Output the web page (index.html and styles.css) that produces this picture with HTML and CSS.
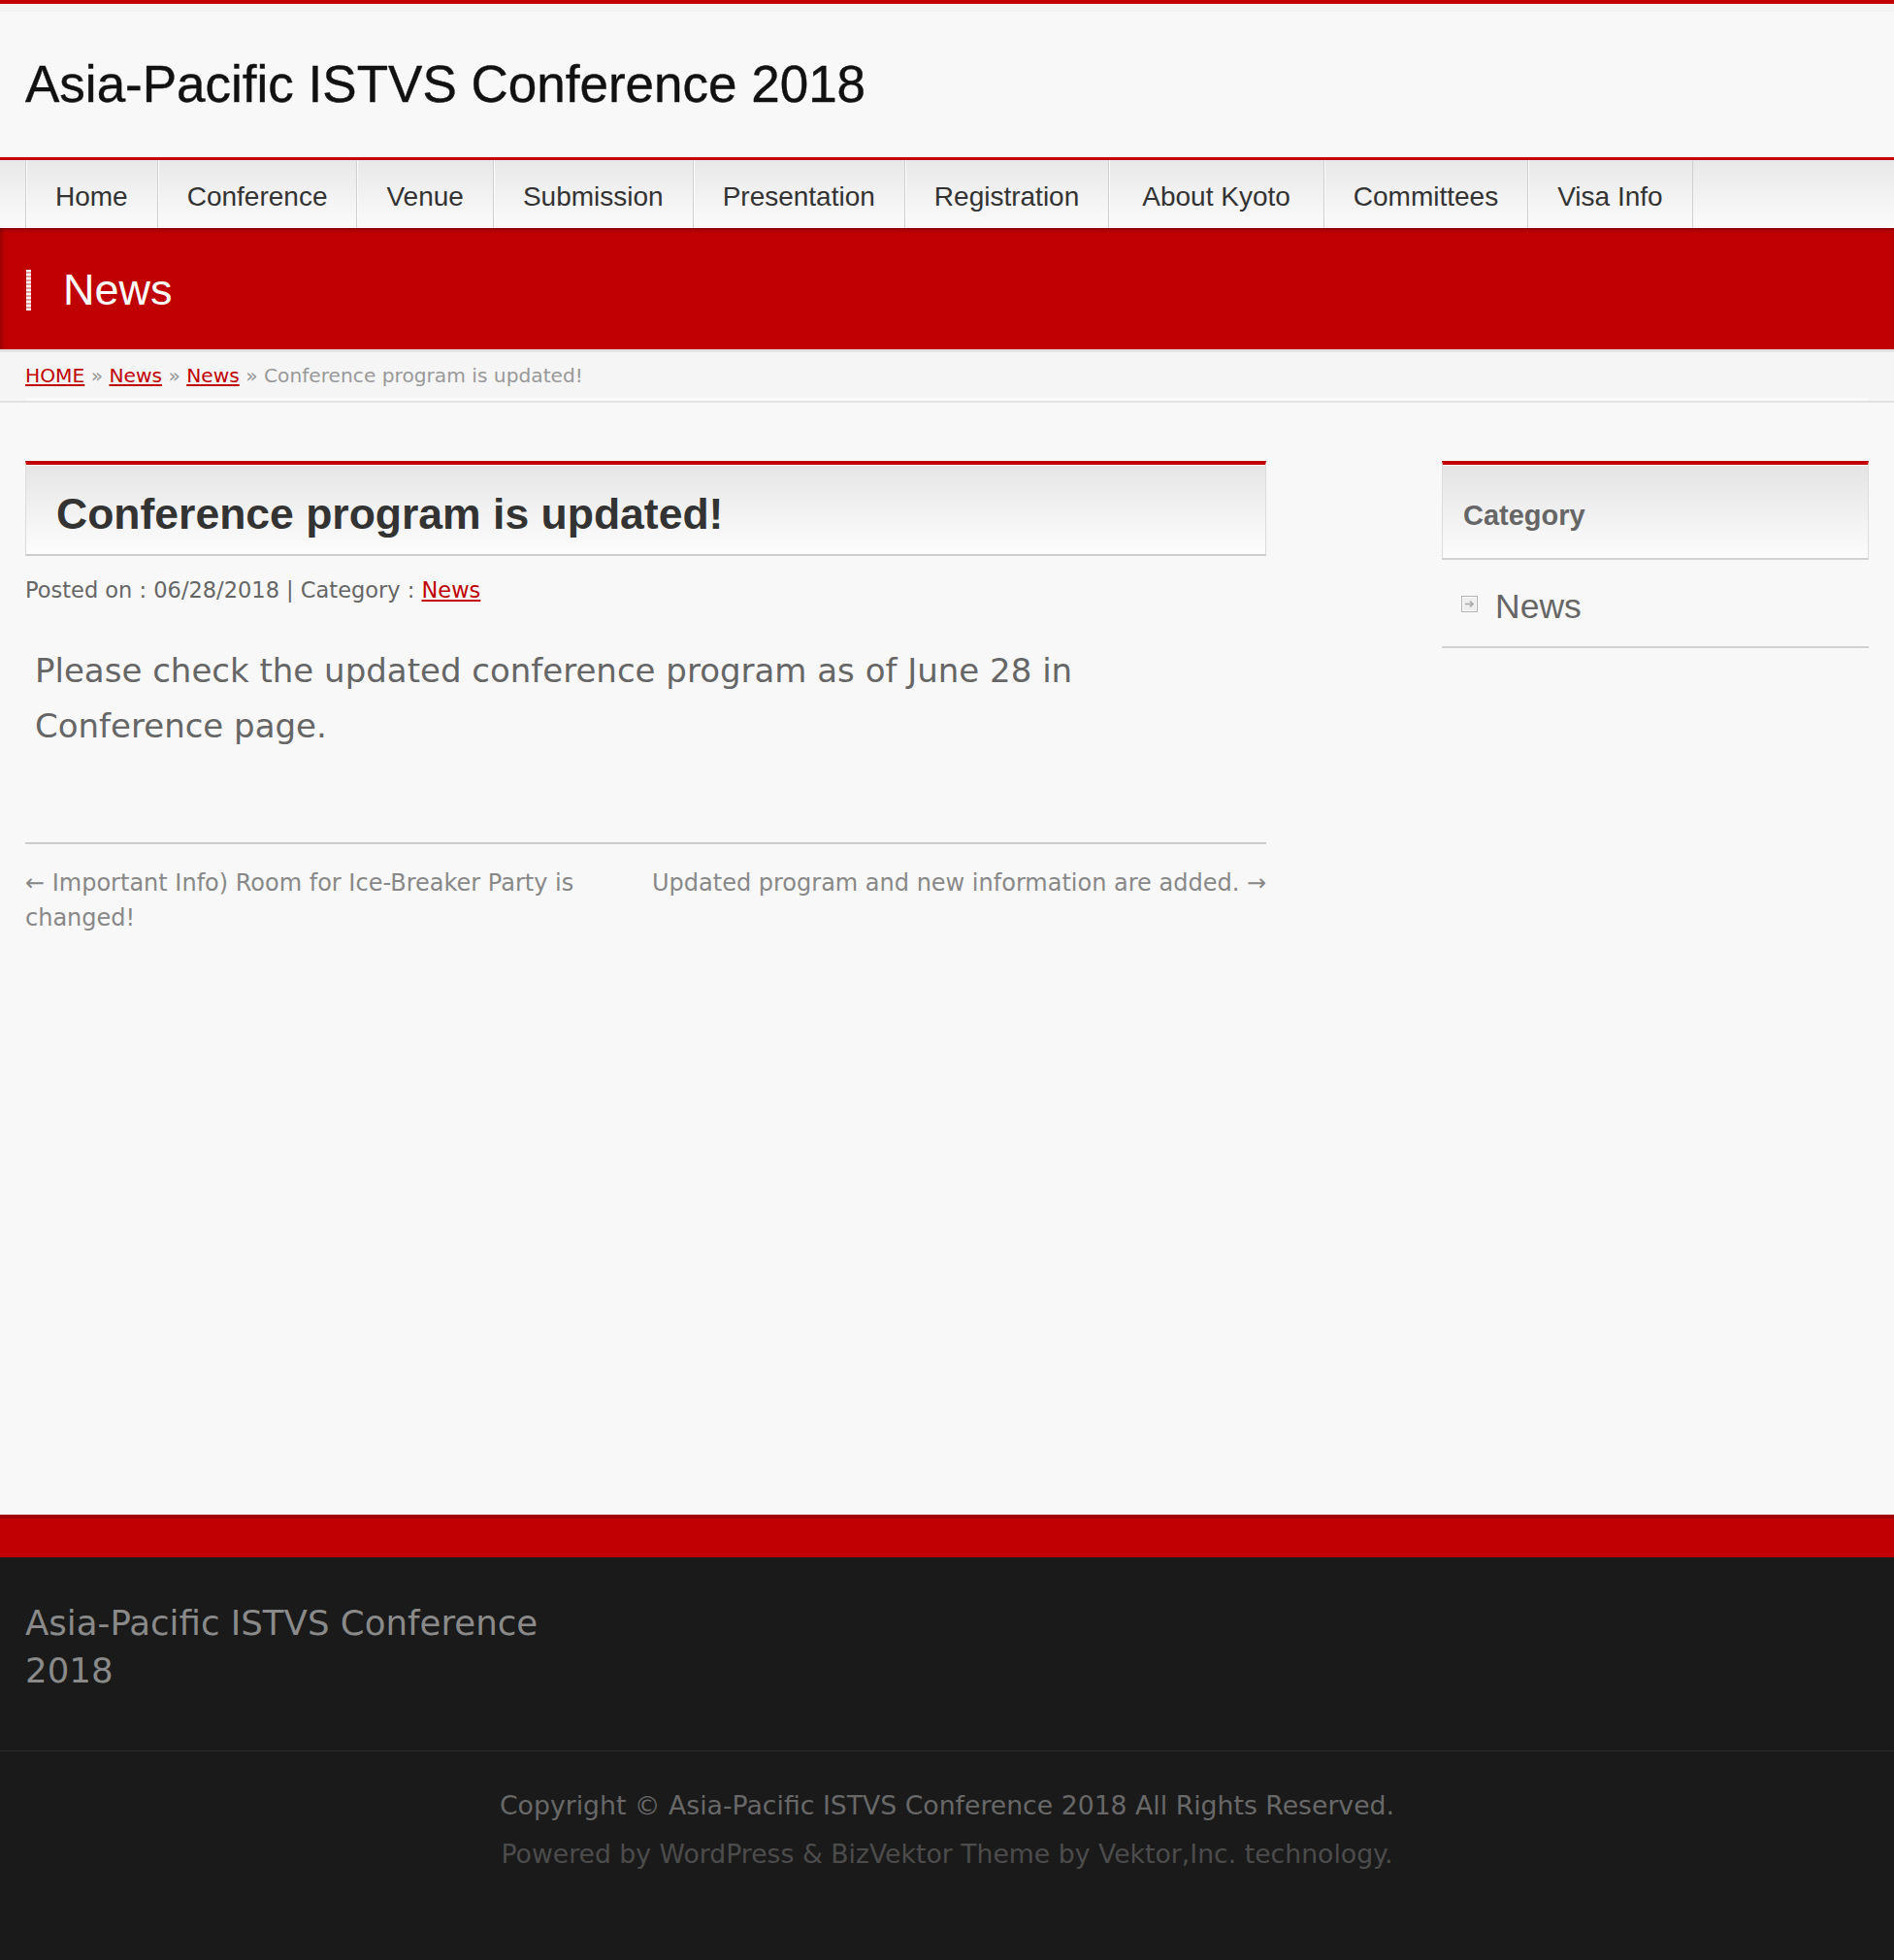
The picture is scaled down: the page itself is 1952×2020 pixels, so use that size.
FILE: index.html
```html
<!DOCTYPE html>
<html lang="en">
<head>
<meta charset="utf-8">
<title>Conference program is updated! | Asia-Pacific ISTVS Conference 2018</title>
<link rel="stylesheet" href="styles.css">
</head>
<body>
<header class="site-header">
  <div class="top-strip"></div>
  <div class="container">
    <h1 class="site-title">Asia-Pacific ISTVS Conference 2018</h1>
  </div>
</header>

<nav class="global-nav">
  <div class="container">
    <ul class="menu">
      <li><a href="#">Home</a></li>
      <li><a href="#">Conference</a></li>
      <li><a href="#">Venue</a></li>
      <li><a href="#">Submission</a></li>
      <li><a href="#">Presentation</a></li>
      <li><a href="#">Registration</a></li>
      <li><a href="#" class="wide">About Kyoto</a></li>
      <li><a href="#">Committees</a></li>
      <li><a href="#">Visa Info</a></li>
    </ul>
  </div>
</nav>

<div class="page-title">
  <div class="container page-title-inner">
    <span class="title-mark"></span>
    <h2>News</h2>
  </div>
</div>

<div class="breadcrumb">
  <div class="container breadcrumb-inner">
    <a href="#">HOME</a><span class="sep"> » </span><a href="#">News</a><span class="sep"> » </span><a href="#">News</a><span class="sep"> » </span><span class="current">Conference program is updated!</span>
  </div>
</div>

<div class="container content-wrap">
  <main class="main">
    <div class="entry-title-box">
      <h1 class="entry-title">Conference program is updated!</h1>
    </div>
    <div class="entry-meta">Posted on : 06/28/2018 | Category : <a href="#">News</a></div>
    <div class="entry-content">
      <p>Please check the updated conference program as of June 28 in Conference page.</p>
    </div>
    <div class="post-nav">
      <a class="prev" href="#">← Important Info) Room for Ice-Breaker Party is changed!</a>
      <a class="next" href="#">Updated program and new information are added. →</a>
    </div>
  </main>

  <aside class="sidebar">
    <div class="widget-title-box">
      <h3 class="widget-title">Category</h3>
    </div>
    <ul class="cat-list">
      <li>
        <svg class="cat-icon" width="17" height="17" viewBox="0 0 17 17">
          <rect x="0.5" y="0.5" width="16" height="16" fill="#eeeeee" stroke="#b4b4b4"/>
          <rect x="1.5" y="1.5" width="14" height="14" fill="none" stroke="#fafafa"/>
          <path d="M4 8.5 H12 M9 5.5 L12 8.5 L9 11.5" fill="none" stroke="#a8a8a8" stroke-width="1.6"/>
        </svg>
        <a href="#">News</a>
      </li>
    </ul>
  </aside>
</div>

<footer class="site-footer">
  <div class="footer-band"></div>
  <div class="footer-main">
    <div class="container">
      <div class="footer-site-name">Asia-Pacific ISTVS Conference 2018</div>
    </div>
  </div>
  <div class="copyright">
    <div class="copy-line">Copyright © Asia-Pacific ISTVS Conference 2018 All Rights Reserved.</div>
    <div class="powered-line">Powered by WordPress &amp; BizVektor Theme by Vektor,Inc. technology.</div>
  </div>
</footer>
</body>
</html>
```

FILE: styles.css
```css
* { box-sizing: border-box; }

html, body {
  margin: 0;
  padding: 0;
}

body {
  background: #f8f8f8;
  font-family: "DejaVu Sans", "Liberation Sans", sans-serif;
  color: #666;
}

a { color: #c00000; }

.container {
  width: 1900px;
  margin: 0 auto;
}

/* Header */
.site-header {
  border-top: 4px solid #c40000;
}

.top-strip {
  height: 8px;
  background: #f2f2f2;
}

.site-title {
  margin: 0;
  padding: 43px 0 43px;
  font-family: "Liberation Sans", Arial, sans-serif;
  font-weight: normal;
  font-size: 53px;
  line-height: 64px;
  color: #111;
  -webkit-text-stroke: 0.4px #111;
}

/* Global nav */
.global-nav {
  border-top: 3px solid #c40000;
  background: linear-gradient(to bottom, #e8e8e8 0%, #fbfbfb 100%);
  height: 73px;
}

.menu {
  list-style: none;
  margin: 0;
  padding: 0;
  display: flex;
  height: 70px;
}

.menu li {
  border-left: 1px solid #cfcfcf;
  box-shadow: inset 1px 0 0 #fdfdfd;
}

.menu li:last-child {
  border-right: 1px solid #cfcfcf;
}

.menu a {
  display: block;
  padding: 5px 30px 0 30px;
  line-height: 65px;
  font-family: "Liberation Sans", Arial, sans-serif;
  font-size: 28px;
  color: #333;
  text-decoration: none;
}

.menu a.wide {
  padding: 5px 34px 0 34px;
}

/* Page title band */
.page-title {
  background: #c00000;
  height: 125px;
  box-shadow: inset 0 4px 4px -2px rgba(0, 0, 0, 0.28), inset 5px 0 5px -3px rgba(0, 0, 0, 0.22);
}

.page-title-inner {
  display: flex;
  align-items: center;
  height: 125px;
  padding-top: 3px;
}

.title-mark {
  width: 5px;
  height: 42px;
  margin-left: 1px;
  margin-right: 33px;
  background: repeating-linear-gradient(to bottom, #ffffff 0 2px, #e99a9a 2px 4px);
}

.page-title h2 {
  margin: 0;
  font-family: "Liberation Sans", Arial, sans-serif;
  font-weight: normal;
  font-size: 45px;
  line-height: 56px;
  color: #fff;
}

/* Breadcrumb */
.breadcrumb {
  background: #f5f5f5;
  border-top: 3px solid #e3e3e3;
  border-bottom: 2px solid #e2e2e2;
}

.breadcrumb-inner {
  height: 50px;
  padding-top: 2px;
  line-height: 45px;
  font-size: 20.2px;
  border-bottom: 3px solid #fbfbfb;
  color: #999;
}

.breadcrumb-inner .sep { color: #999; }
.breadcrumb-inner .current { color: #999; }

/* Content */
.content-wrap {
  display: flex;
  justify-content: space-between;
  align-items: flex-start;
  padding-top: 60px;
  min-height: 1146px;
}

.main {
  width: 1279px;
}

.entry-title-box {
  border-top: 4px solid #c00000;
  border-left: 1px solid #dcdcdc;
  border-right: 1px solid #dcdcdc;
  border-bottom: 2px solid #cccccc;
  background: linear-gradient(to bottom, #e5e5e5 0%, #fdfdfd 100%);
  box-shadow: inset 0 1px 0 #ffffff;
  height: 98px;
  padding: 22px 0 0 31px;
}

.entry-title {
  margin: 0;
  font-family: "Liberation Sans", Arial, sans-serif;
  font-weight: bold;
  font-size: 44.5px;
  line-height: 58px;
  color: #333;
}

.entry-meta {
  margin-top: 19px;
  font-size: 22.5px;
  line-height: 33px;
  color: #666;
}

.entry-content {
  margin-top: 38px;
  padding: 0 10px;
}

.entry-content p {
  margin: 0;
  font-size: 34px;
  line-height: 57px;
  color: #666;
}

.post-nav {
  margin-top: 91px;
  border-top: 2px solid #cccccc;
  padding-top: 22px;
  display: flex;
  justify-content: space-between;
  align-items: flex-start;
}

.post-nav a {
  font-size: 24px;
  line-height: 36px;
  color: #888;
  text-decoration: none;
}

.post-nav .prev { width: 590px; }
.post-nav .next { width: 650px; text-align: right; }

/* Sidebar */
.sidebar {
  width: 440px;
}

.widget-title-box {
  border-top: 4px solid #c00000;
  border-left: 1px solid #dddddd;
  border-right: 1px solid #dddddd;
  border-bottom: 2px solid #d2d2d2;
  background: linear-gradient(to bottom, #e4e4e4 0%, #fcfcfc 100%);
  box-shadow: inset 0 1px 0 #ffffff;
  height: 102px;
  padding: 33px 0 0 21px;
}

.widget-title {
  margin: 0;
  font-family: "Liberation Sans", Arial, sans-serif;
  font-weight: bold;
  font-size: 29px;
  line-height: 38px;
  color: #666;
}

.cat-list {
  list-style: none;
  margin: 0;
  padding: 0;
}

.cat-list li {
  display: flex;
  align-items: center;
  padding: 24px 0 17px 20px;
  border-bottom: 2px solid #d0d0d0;
}

.cat-icon {
  flex: none;
  margin-right: 18px;
  margin-top: -5px;
}

.cat-list a {
  font-family: "Liberation Sans", Arial, sans-serif;
  font-size: 35.5px;
  line-height: 48px;
  color: #666;
  text-decoration: none;
}

/* Footer */
.site-footer {
  background: #1a1a1a;
}

.footer-band {
  height: 44px;
  background: #c00000;
  border-top: 4px solid #a20000;
}

.footer-main {
  padding: 43px 0 58px;
  border-bottom: 1px solid #2c2c2c;
}

.footer-site-name {
  width: 590px;
  font-size: 35.6px;
  line-height: 49px;
  color: #8a8a8a;
}

.copyright {
  padding: 31px 0 84px;
  text-align: center;
  font-size: 26.7px;
  line-height: 50px;
}

.copy-line { color: #686868; }
.powered-line { color: #4c4c4c; }
```
